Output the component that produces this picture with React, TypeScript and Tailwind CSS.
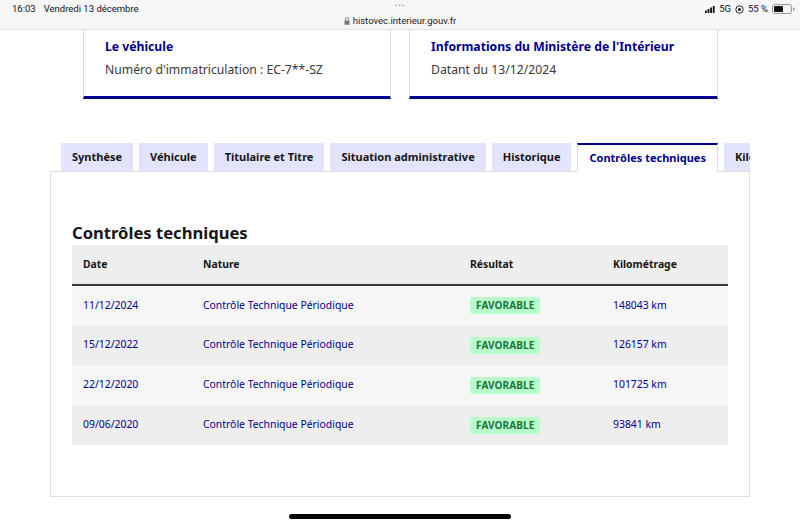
import React from "react";

const rows = [
  { date: "11/12/2024", nature: "Contrôle Technique Périodique", km: "148043 km" },
  { date: "15/12/2022", nature: "Contrôle Technique Périodique", km: "126157 km" },
  { date: "22/12/2020", nature: "Contrôle Technique Périodique", km: "101725 km" },
  { date: "09/06/2020", nature: "Contrôle Technique Périodique", km: "93841 km" },
];

const tabs = [
  "Synthèse",
  "Véhicule",
  "Titulaire et Titre",
  "Situation administrative",
  "Historique",
  "Contrôles techniques",
  "Kilométrage",
];

function StatusBar() {
  return (
    <div className="relative h-[30px] bg-[#f7f7f7] border-b border-[#e2e2e2] text-[#111] font-['Roboto',sans-serif]">
      <div className="absolute left-[12px] top-[2px] text-[9.5px] flex gap-[8px]">
        <span>16:03</span>
        <span>Vendredi 13 décembre</span>
      </div>
      <div className="absolute left-0 right-0 top-0 flex justify-center text-[8px] text-[#999] tracking-[1px]">•••</div>
      <div className="absolute left-0 right-0 top-[14px] flex justify-center items-center gap-[3px] text-[9.5px] text-[#222]">
        <svg width="6" height="8" viewBox="0 0 6 8">
          <path d="M1.3 3.5V2.3a1.7 1.7 0 0 1 3.4 0v1.2" stroke="#777" strokeWidth="0.9" fill="none" />
          <rect x="0.5" y="3.5" width="5" height="4.2" rx="0.6" fill="#777" />
        </svg>
        <span>histovec.interieur.gouv.fr</span>
      </div>
      <div className="absolute right-[5px] top-[2px] flex items-center gap-[4px] text-[9.5px]">
        <svg width="10" height="7" viewBox="0 0 10 7">
          <rect x="0" y="4.5" width="1.8" height="2.5" fill="#111" />
          <rect x="2.6" y="3" width="1.8" height="4" fill="#111" />
          <rect x="5.2" y="1.5" width="1.8" height="5.5" fill="#111" />
          <rect x="7.8" y="0" width="1.8" height="7" fill="#111" />
        </svg>
        <span>5G</span>
        <svg width="9" height="9" viewBox="0 0 9 9">
          <circle cx="4.5" cy="4.5" r="3.7" stroke="#111" strokeWidth="0.9" fill="none" />
          <circle cx="4.5" cy="4.5" r="1.5" fill="#111" />
        </svg>
        <span>55 %</span>
        <svg width="23" height="10" viewBox="0 0 23 10">
          <rect x="0.5" y="0.5" width="19" height="9" rx="2.5" stroke="#999" fill="none" />
          <rect x="2" y="2" width="9" height="6" rx="1" fill="#111" />
          <path d="M21 3.3v3.4a1.6 1.6 0 0 0 0-3.4z" fill="#999" />
        </svg>
      </div>
    </div>
  );
}

function InfoCard({ title, text, width }: { title: string; text: string; width: string }) {
  return (
    <div className={`${width} h-[69px] border-x border-[#dddddd] border-b-[3px] border-b-[#000091] bg-white px-[21px] pt-[9px]`}>
      <div className="text-[12.2px] font-bold text-[#000091] leading-[16px]">{title}</div>
      <div className="mt-[7px] text-[12.2px] text-[#3a3a3a] leading-[16px]">{text}</div>
    </div>
  );
}

export default function App() {
  return (
    <div className="w-[800px] h-[525px] overflow-hidden bg-white font-['Noto_Sans',sans-serif] relative">
      <StatusBar />

      <div className="flex gap-[18px] ml-[83px]">
        <InfoCard width="w-[308px]" title="Le véhicule" text="Numéro d'immatriculation : EC-7**-SZ" />
        <InfoCard width="w-[309px]" title="Informations du Ministère de l'Intérieur" text="Datant du 13/12/2024" />
      </div>

      <div className="mt-[44px] mx-[50px]">
        <div className="flex gap-[6px] pl-[11px] overflow-hidden h-[29px] items-start relative z-10">
          {tabs.map((t) => {
            const active = t === "Contrôles techniques";
            return (
              <div
                key={t}
                className={
                  active
                    ? "shrink-0 h-[29px] px-[11px] flex items-center bg-white border-t-2 border-t-[#000091] border-x border-x-[#dddddd] text-[#000091] text-[11px] font-bold whitespace-nowrap"
                    : "shrink-0 h-[28px] px-[11px] flex items-center bg-[#e3e3fd] text-[#161616] text-[11px] font-bold whitespace-nowrap"
                }
              >
                {t}
              </div>
            );
          })}
        </div>
        <div className="-mt-px h-[326px] border border-[#dddddd] px-[21px] pt-[49px]">
          <h2 className="text-[16.6px] font-bold text-[#161616] leading-[24px]">Contrôles techniques</h2>
          <table className="w-full border-collapse text-[10.4px]">
            <thead>
              <tr className="bg-[#eeeeee] border-b-2 border-[#3a3a3a] h-[40px]">
                <th className="text-left font-bold text-[#161616] pl-[11px] w-[131px]">Date</th>
                <th className="text-left font-bold text-[#161616] w-[267px]">Nature</th>
                <th className="text-left font-bold text-[#161616] w-[143px]">Résultat</th>
                <th className="text-left font-bold text-[#161616]">Kilométrage</th>
              </tr>
            </thead>
            <tbody>
              {rows.map((r, i) => (
                <tr key={r.date} className={i % 2 === 0 ? "bg-[#f6f6f6] h-[40px]" : "bg-[#eeeeee] h-[40px]"}>
                  <td className="pl-[11px] text-[#000091]">{r.date}</td>
                  <td className="text-[#000091]">{r.nature}</td>
                  <td>
                    <span className="inline-block bg-[#b8fec9] text-[#18753c] font-bold text-[10px] leading-[17px] px-[6px] rounded-[3px] tracking-[0.1px]">
                      FAVORABLE
                    </span>
                  </td>
                  <td className="text-[#000091]">{r.km}</td>
                </tr>
              ))}
            </tbody>
          </table>
        </div>
      </div>

      <div className="absolute left-[289px] bottom-[6px] w-[222px] h-[5px] rounded-full bg-black" />
    </div>
  );
}
